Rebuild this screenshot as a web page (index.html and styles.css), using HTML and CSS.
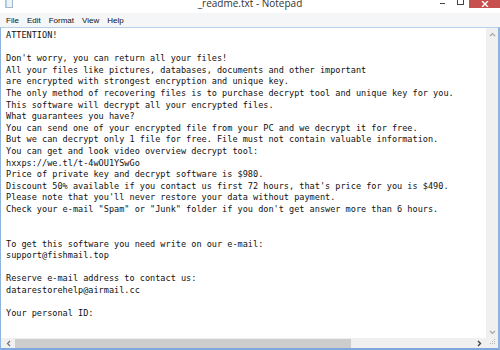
FILE: index.html
```html
<!DOCTYPE html>
<html lang="en">
<head>
    <meta charset="UTF-8">
    <title>_readme.txt - Notepad</title>
    <link rel="stylesheet" href="styles.css">
</head>
<body>
    <div class="window">
        <div class="titlebar">
            <div class="appicon">
                <svg width="8" height="8" viewBox="0 0 8 8">
                    <rect x="0.5" y="-2" width="7" height="9.5" fill="#eef3f8" stroke="#9fb6cc"/>
                    <rect x="0.5" y="-2" width="1.5" height="9.5" fill="#b9cfe3"/>
                </svg>
            </div>
            <div class="title">_readme.txt - Notepad</div>
            <div class="controls">
                <span class="ctl min"></span>
                <span class="ctl max"></span>
                <span class="ctl close">
                    <svg width="8" height="6" viewBox="0 0 8 6">
                        <path d="M1 0 L7 6 M7 0 L1 6" stroke="#fff" stroke-width="1.4"/>
                    </svg>
                </span>
            </div>
        </div>
        <div class="menubar">
            <span>File</span>
            <span>Edit</span>
            <span>Format</span>
            <span>View</span>
            <span>Help</span>
        </div>
        <div class="editor">
<pre class="text">ATTENTION!

Don't worry, you can return all your files!
All your files like pictures, databases, documents and other important
are encrypted with strongest encryption and unique key.
The only method of recovering files is to purchase decrypt tool and unique key for you.
This software will decrypt all your encrypted files.
What guarantees you have?
You can send one of your encrypted file from your PC and we decrypt it for free.
But we can decrypt only 1 file for free. File must not contain valuable information.
You can get and look video overview decrypt tool:
hxxps://we.tl/t-4wOU1YSwGo
Price of private key and decrypt software is $980.
Discount 50% available if you contact us first 72 hours, that's price for you is $490.
Please note that you'll never restore your data without payment.
Check your e-mail "Spam" or "Junk" folder if you don't get answer more than 6 hours.


To get this software you need write on our e-mail:
support@fishmail.top

Reserve e-mail address to contact us:
datarestorehelp@airmail.cc

Your personal ID:
</pre>
            <div class="vscroll">
                <svg width="7" height="5" viewBox="0 0 7 5"><path d="M1 4 L3.5 1.5 L6 4" fill="none" stroke="#a6a6a6" stroke-width="1.2"/></svg>
                <svg width="7" height="5" viewBox="0 0 7 5"><path d="M1 1 L3.5 3.5 L6 1" fill="none" stroke="#a6a6a6" stroke-width="1.2"/></svg>
            </div>
            <div class="hscroll">
                <svg class="arrow" width="5" height="7" viewBox="0 0 5 7"><path d="M4 1 L1.5 3.5 L4 6" fill="none" stroke="#707070" stroke-width="1.2"/></svg>
                <div class="thumb"></div>
                <svg class="arrow right" width="5" height="7" viewBox="0 0 5 7"><path d="M1 1 L3.5 3.5 L1 6" fill="none" stroke="#404040" stroke-width="1.4"/></svg>
            </div>
            <div class="corner">
                <svg width="8" height="8" viewBox="0 0 8 8" fill="#b8b8b8">
                    <rect x="6" y="0" width="1" height="1"/>
                    <rect x="4" y="2" width="1" height="1"/>
                    <rect x="6" y="2" width="1" height="1"/>
                    <rect x="2" y="4" width="1" height="1"/>
                    <rect x="4" y="4" width="1" height="1"/>
                    <rect x="6" y="4" width="1" height="1"/>
                </svg>
            </div>
        </div>
    </div>
</body>
</html>
```

FILE: styles.css
```css
html, body {
    margin: 0;
    padding: 0;
    background-color: #fff;
}
.window {
    width: 500px;
    height: 350px;
    display: flex;
    flex-direction: column;
    overflow: hidden;
}
.titlebar {
    height: 13px;
    display: grid;
    grid-template-columns: 1fr auto 1fr;
    align-items: start;
    background-color: #fff;
}
.appicon {
    padding-left: 5px;
    height: 8px;
}
.appicon svg {
    display: block;
}
.title {
    font-family: "Open Sans", "Noto Sans", sans-serif;
    font-size: 10px;
    line-height: 6px;
    color: #333;
}
.controls {
    display: flex;
    justify-content: flex-end;
    align-items: flex-start;
}
.ctl {
    display: block;
}
.min {
    width: 5px;
    height: 1px;
    background-color: #444;
    margin-top: 3px;
    margin-right: 12px;
}
.max {
    width: 5px;
    height: 4px;
    border: 1px solid #444;
    border-top: none;
    margin-right: 5px;
}
.close {
    width: 31px;
    height: 8px;
    background-color: #c7504f;
    display: flex;
    justify-content: center;
    align-items: flex-end;
}
.close svg {
    display: block;
    margin-bottom: 1px;
}
.menubar {
    height: 14px;
    background-color: #f5f6f7;
    display: flex;
    align-items: center;
    gap: 8px;
    padding-left: 6px;
    font-family: "Liberation Sans", Arial, sans-serif;
    font-size: 8px;
    color: #111;
}
.editor {
    flex: 1;
    min-height: 0;
    display: grid;
    grid-template-columns: 1fr 12px;
    grid-template-rows: 1fr 10px;
    border-top: 1px solid #b8cfe9;
    border-left: 1px solid #8fb3df;
    border-right: 2px solid #8fb3df;
    border-bottom: 2px solid #7ea8dc;
}
.text {
    margin: 0;
    padding: 2px 0 0 5px;
    font-family: "DejaVu Sans Mono", "Liberation Mono", monospace;
    font-size: 8.55px;
    line-height: 11.6px;
    color: #111;
    overflow: hidden;
    white-space: pre;
}
.vscroll {
    background-color: #f0f0f0;
    display: flex;
    flex-direction: column;
    justify-content: space-between;
    align-items: center;
    padding: 4px 0 3px;
}
.vscroll svg, .hscroll svg, .corner svg {
    display: block;
}
.hscroll {
    background-color: #f0f0f0;
    display: flex;
    align-items: center;
    padding-left: 5px;
}
.thumb {
    width: 336px;
    height: 9px;
    margin-left: 4px;
    background-color: #cdcdcd;
}
.arrow.right {
    margin-left: auto;
    margin-right: 4px;
}
.corner {
    background-color: #f0f0f0;
    display: flex;
    justify-content: flex-end;
    align-items: flex-end;
    padding: 0 2px 1px 0;
}
```
